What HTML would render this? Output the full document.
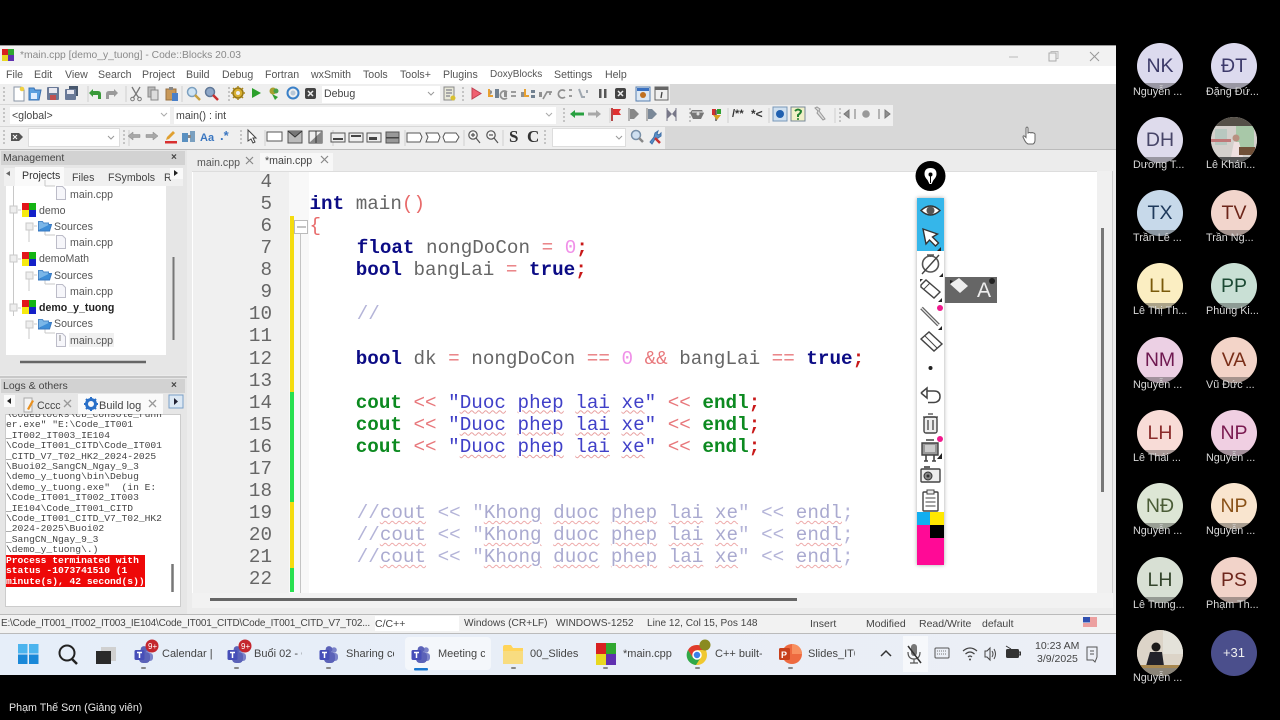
<!DOCTYPE html>
<html lang="vi"><head><meta charset="utf-8"><title>Code::Blocks</title>
<style>
html,body{margin:0;padding:0;width:1280px;height:720px;background:#000;overflow:hidden}
body{font-family:"Liberation Sans","Noto Sans CJK SC",sans-serif;position:relative}
.r{position:absolute}
.t{position:absolute;white-space:pre;line-height:14px;font-size:10.6px;color:#555}
#win{position:absolute;left:0;top:0;width:1280px;height:720px;filter:blur(.35px)}
#code{position:absolute;left:309.5px;top:171px;margin:0;font:19.25px/22.06px "Liberation Mono",monospace;color:#666;white-space:pre}
#nums{position:absolute;left:232px;width:40px;top:171px;margin:0;font:19.25px/22.06px "Liberation Mono",monospace;color:#666;text-align:right;white-space:pre}
.k{color:#0b0b85;font-weight:bold}.o{color:#e8787c}.n{color:#f090e8}.s{color:#c81818;font-weight:bold}.p{color:#e86a6a}
.g{color:#0c8a20;font-weight:bold}.q{color:#4040c8}.c{color:#b4b4d8;position:relative;left:1px}
.u{text-decoration:underline wavy #e8a0a0 1px;text-underline-offset:2px}
.c .w{color:#aaaad0;text-decoration:underline wavy #eeaaaa 1px;text-underline-offset:2px}
#log{position:absolute;left:6px;top:410px;width:170px;height:194px;overflow:hidden;clip-path:inset(4px 0 0 0);margin:0;font:9.65px/10.4px "Liberation Mono",monospace;color:#444;white-space:pre}
.av{position:absolute;width:46px;height:46px;border-radius:50%;overflow:hidden;text-align:center;font-size:19.5px;line-height:46px}
.av i{position:absolute;left:0;right:0;bottom:0;height:6px;background:rgba(60,60,60,.42)}
.lb{position:absolute;white-space:pre;font-size:10.8px;line-height:13px;color:#d8d8d8;margin-top:1px}
.tb{position:absolute;white-space:pre;font-size:11px;line-height:14px;color:#444;top:647px}
.st{font-size:10.5px;color:#444;top:617px}
</style></head><body>
<div id="win">
<div class="r" style="left:0;top:45px;width:1116px;height:630px;background:#d8d8d8"></div>
<div class="r" style="left:0;top:45px;width:1116px;height:21px;background:#f2f2f2;border-top:1px solid #999;box-sizing:border-box"></div>
<div class="r" style="left:0;top:66px;width:1116px;height:18px;background:#fff"></div>
<div class="r" style="left:0;top:84px;width:670px;height:20px;background:#efefef"></div>
<div class="r" style="left:0;top:105px;width:893px;height:21px;background:#efefef"></div>
<div class="r" style="left:0;top:127px;width:665px;height:22px;background:#efefef"></div>
<div class="r" style="left:0;top:149px;width:1116px;height:465px;background:#ececec;border-top:1px solid #bbb;box-sizing:border-box"></div>

<div class="t" style="left:20px;top:49px;font-size:10.3px;color:#8a8a8a">*main.cpp [demo_y_tuong] - Code::Blocks 20.03</div>
<div class="t" style="left:6px;top:68px">File</div><div class="t" style="left:34px;top:68px">Edit</div><div class="t" style="left:65px;top:68px">View</div><div class="t" style="left:98px;top:68px">Search</div><div class="t" style="left:142px;top:68px">Project</div><div class="t" style="left:186px;top:68px">Build</div><div class="t" style="left:222px;top:68px">Debug</div><div class="t" style="left:265px;top:68px">Fortran</div><div class="t" style="left:311px;top:68px">wxSmith</div><div class="t" style="left:363px;top:68px">Tools</div><div class="t" style="left:400px;top:68px">Tools+</div><div class="t" style="left:443px;top:68px">Plugins</div><div class="t" style="left:490px;top:68px;font-size:10px">DoxyBlocks</div><div class="t" style="left:554px;top:68px">Settings</div><div class="t" style="left:605px;top:68px">Help</div>

<!-- combos -->
<div class="r" style="left:322px;top:86px;width:118px;height:17px;background:#fff"></div>
<div class="t" style="left:324px;top:87px;color:#444">Debug</div>
<div class="r" style="left:10px;top:107px;width:160px;height:17px;background:#fff"></div>
<div class="t" style="left:12px;top:109px;color:#444">&lt;global&gt;</div>
<div class="r" style="left:174px;top:107px;width:382px;height:17px;background:#fff"></div>
<div class="t" style="left:176px;top:109px;color:#444">main() : int</div>
<div class="r" style="left:28px;top:128px;width:92px;height:19px;background:#fff;border:1px solid #ddd;box-sizing:border-box"></div>
<div class="r" style="left:552px;top:128px;width:74px;height:19px;background:#fff;border:1px solid #ddd;box-sizing:border-box"></div>
<div class="t" style="left:509px;top:128px;font:bold 17px/18px 'Liberation Serif',serif;color:#333">S</div>
<div class="t" style="left:527px;top:128px;font:bold 17px/18px 'Liberation Serif',serif;color:#333">C</div>
<div class="t" style="left:732px;top:107px;font:bold 11px/14px 'Liberation Sans',sans-serif;color:#333">/**</div>
<div class="t" style="left:751px;top:107px;font:bold 12px/14px 'Liberation Sans',sans-serif;color:#333">*&lt;</div>
<div class="t" style="left:220px;top:129px;font:bold 13px/14px 'Liberation Sans',sans-serif;color:#3a76c0">.*</div>

<svg class="r" style="left:0;top:0" width="1280" height="720" viewBox="0 0 1280 720" fill="none">
<defs>
<symbol id="tm" viewBox="0 0 20 20"><circle cx="15" cy="5" r="2.8" fill="#7b83c9"/><rect x="11" y="8" width="8" height="8" rx="3" fill="#7b83c9"/><circle cx="10" cy="4.5" r="3.4" fill="#5b62b8"/><rect x="5" y="7" width="11" height="11" rx="4" fill="#5b62b8"/><rect x="0.5" y="5" width="10" height="10" rx="1.5" fill="#464eb8"/><path d="M3 7.5h5M5.5 7.5v5.5" stroke="#fff" stroke-width="1.5"/></symbol>
<symbol id="pj" viewBox="0 0 14 14"><rect x="0" y="0" width="7" height="7" fill="#e2161a"/><rect x="7" y="0" width="7" height="7" fill="#14b414"/><rect x="0" y="7" width="7" height="7" fill="#f6ea10"/><rect x="7" y="7" width="7" height="7" fill="#1420c8"/></symbol>
<symbol id="fo" viewBox="0 0 14 12"><path d="M.5 2.5V11h11L13.5 4.5H4L2.5 10" fill="#3e8ed8" stroke="#3a78c0"/><path d="M.5 10V1.5h4l1 1.5h5v2" fill="#7ab6e8" stroke="#4a88c8"/></symbol>
<symbol id="fi" viewBox="0 0 10 14"><path d="M.5.5h6l3 3v10h-9z" fill="#f6f6fa" stroke="#bcbcc8"/></symbol>
</defs>

<!-- app icon and window controls -->
<g transform="translate(2,49)"><rect width="6" height="6" fill="#d82020"/><rect x="6" width="6" height="6" fill="#30a830"/><rect y="6" width="6" height="6" fill="#e8d820"/><rect x="6" y="6" width="6" height="6" fill="#6030b0"/></g>
<path d="M1009 57h9" stroke="#bbb"/><rect x="1049" y="53" width="7" height="8" stroke="#aaa"/><path d="M1051 53v-1.500h7v7h-2" stroke="#bbb"/><path d="M1090 52l9 9M1099 52l-9 9" stroke="#999"/>

<!-- grips -->
<g stroke="#c4c4c4" stroke-dasharray="2 2" stroke-width="2"><path d="M4 87v15M229 87v15M463 87v15M4 108v16M564 108v16M690 108v16M840 108v16M4 130v16M124 130v16M241 130v16M545 130v16M672 87v0"/></g>
<g stroke="#cfcfcf"><path d="M88 86v16M126 86v16M182 86v16M638 87v15M610 108v15M728 108v15M835 108v15M769 108v15M129 130v16M265 130v16M333 130v16M405 130v16M464 130v16M503 130v16"/></g>

<!-- row 1 -->
<path d="M14 87h7l3 3v11H14z" fill="#fff" stroke="#8a94a4"/><circle cx="22" cy="89" r="2.300" fill="#f0d040"/>
<path d="M29 100V88h5l1 2h6l-2 10z" fill="#5aa0e0" stroke="#3a70b0"/><rect x="31" y="93" width="6" height="6" fill="#dfeeff"/>
<rect x="47" y="87" width="12" height="13" rx="1" fill="#6a7a98"/><rect x="49" y="88" width="8" height="5" fill="#e8e8f0"/><rect x="50" y="95" width="6" height="5" fill="#c05050"/>
<rect x="69" y="86" width="9" height="10" fill="#48586e"/><rect x="65" y="89" width="11" height="11" rx="1" fill="#6a7a98"/><rect x="67" y="90" width="7" height="4" fill="#e8e8f0"/>
<path d="M89 93l4-4v2h5q3 0 3 3v5h-3v-4h-5v2z" fill="#3a9a3a"/>
<path d="M118 93l-4-4v2h-5q-3 0-3 3v5h3v-4h5v2z" fill="#9a9a9a"/>
<path d="M132 87l4 7 4-7M136 94l-3 4M136 94l3 4" stroke="#777" stroke-width="1.300"/><circle cx="132.500" cy="99" r="1.800" stroke="#777"/><circle cx="139.500" cy="99" r="1.800" stroke="#777"/>
<rect x="148" y="87" width="7" height="10" fill="#bbb" stroke="#888"/><rect x="151" y="90" width="7" height="10" fill="#ddd" stroke="#888"/>
<rect x="166" y="89" width="10" height="11" fill="#c89858" stroke="#987040"/><rect x="169" y="87" width="4" height="3" fill="#888"/><rect x="172" y="93" width="6" height="8" fill="#4a80c8"/>
<circle cx="192" cy="92" r="4.500" fill="#cfe4f4" stroke="#7ca0c0" stroke-width="1.500"/><path d="M195 95l5 5" stroke="#c8a040" stroke-width="2.500"/>
<circle cx="210" cy="92" r="4.500" fill="#8fa8c8" stroke="#607898" stroke-width="1.500"/><path d="M213 95l5 5" stroke="#c83030" stroke-width="2.500"/>
<circle cx="238" cy="93" r="5" fill="#d8b030" stroke="#987818" stroke-width="1.500"/><circle cx="238" cy="93" r="2" fill="#efefef"/><path d="M238 86v2M238 98v2M231 93h2M243 93h2M233 88l1 1M243 88l-1 1M233 98l1-1M243 98l-1-1" stroke="#a88820" stroke-width="1.500"/>
<path d="M252 88v10l9-5z" fill="#2ca02c"/>
<circle cx="273" cy="91" r="3.500" fill="#a8a030"/><path d="M272 94l6 3-3 3z" fill="#30a030"/><circle cx="276" cy="91" r="2.500" fill="#48a048"/>
<circle cx="293" cy="93" r="5.500" stroke="#3a80c8" stroke-width="2"/><circle cx="293" cy="93" r="2.500" fill="#b8c8d8"/>
<rect x="305" y="88" width="11" height="11" rx="2" fill="#444"/><path d="M308 91l5 5M313 91l-5 5" stroke="#eee" stroke-width="1.500"/>
<path d="M428 92l3 3 3-3" stroke="#999"/>
<rect x="444" y="87" width="10" height="13" fill="#e8e8d8" stroke="#888"/><path d="M446 90h6M446 93h6M446 96h4" stroke="#667"/><circle cx="453" cy="98" r="2.500" fill="#d8c030"/>
<path d="M472 88v11l9-5.500z" fill="#f06070" stroke="#c04050"/>
<g fill="#909090"><path d="M488 89l2 6 2-2v-2zM504 92h3v5h-3zM521 92h3v5h-3zM539 92h3v5h-3z"/></g>
<path d="M489 89v7h4" stroke="#e8a030" stroke-width="2"/><rect x="495" y="89" width="4" height="9" fill="#708090"/>
<path d="M507 92a4 4 0 1 0 0 6M511 92h5M511 96h5" stroke="#909090" stroke-width="1.700"/>
<path d="M525 89v7h4" stroke="#e8a030" stroke-width="2"/><rect x="531" y="90" width="4" height="3" fill="#708090"/><rect x="531" y="95" width="4" height="3" fill="#708090"/>
<path d="M543 99l4-7h5M550 92v3" stroke="#909090" stroke-width="1.700"/>
<path d="M565 91a4 4 0 1 0 0 6M569 90h3M569 96h3" stroke="#909090" stroke-width="1.700"/>
<path d="M579 89l3 8h3M587 90v3" stroke="#a0a8b0" stroke-width="2"/>
<rect x="599" y="89" width="2.500" height="9" fill="#555"/><rect x="604" y="89" width="2.500" height="9" fill="#555"/>
<rect x="615" y="88" width="11" height="11" rx="2" fill="#444"/><path d="M618 91l5 5M623 91l-5 5" stroke="#eee" stroke-width="1.500"/>
<rect x="636" y="87" width="14" height="14" fill="#dce8f4" stroke="#5a80b0"/><rect x="637" y="88" width="12" height="3" fill="#3a70c0"/><circle cx="643" cy="95" r="3" fill="#c07020"/>
<rect x="655" y="87" width="13" height="13" fill="#f0f0f0" stroke="#666"/><rect x="655" y="87" width="13" height="3" fill="#666"/><path d="M662 92l-1 6" stroke="#444" stroke-width="1.300"/>

<!-- row 2 -->
<path d="M161 113l3 3 3-3M546 113l3 3 3-3" stroke="#aaa"/>
<path d="M570 114l5-4v2.500h9v3h-9V118z" fill="#28a040"/>
<path d="M601 114l-5-4v2.500h-8v3h8V118z" fill="#a8a8a8"/>
<path d="M612 108v13" stroke="#a01010" stroke-width="1.500"/><path d="M613 109h8l-2 3 2 3h-8z" fill="#e03030"/>
<path d="M630 109h4l5 5-5 5h-4z" fill="#888"/><path d="M629 108v13" stroke="#777"/><path d="M648 109h4l5 5-5 5h-4z" fill="#7a8898"/><path d="M647 108v13" stroke="#777"/><path d="M667 108v13M676 108v13" stroke="#778"/><path d="M667 109l5 5 4-5v9l-4-4-5 5z" fill="#778"/>
<path d="M692 110h10l2 3-3 6h-8l-3-6z" fill="#777"/><path d="M692 112h12" stroke="#eee"/><circle cx="698" cy="114" r="1.500" fill="#ddd"/>
<rect x="712" y="109" width="4" height="6" fill="#d03030"/><rect x="717" y="109" width="4" height="5" fill="#30a030"/><path d="M716 110v11" stroke="#555" stroke-width="1.500"/><path d="M713 115h8l-4 5z" fill="#d8a020"/>
<rect x="773" y="107" width="14" height="14" fill="#cfe0f0" stroke="#7a98b8"/><circle cx="780" cy="114" r="4" fill="#2060b0"/>
<rect x="791" y="107" width="14" height="14" fill="#f0f0c8" stroke="#789"/><path d="M795 111q3-3 6 0 0 2-3 4v2" stroke="#208030" stroke-width="2"/><circle cx="798" cy="119" r="1" fill="#208030"/>
<path d="M815 108l3 3-1 2 6 7 2-1-6-8 1-2-3-2z" fill="#ddd" stroke="#999"/>
<path d="M855 109v10M844 114l5-4v8z" stroke="#777" fill="#909090"/>
<circle cx="866" cy="114" r="3.800" fill="#999"/>
<path d="M879 109v10M890 114l-5-4v8z" stroke="#777" fill="#909090"/>

<!-- row 3 -->
<path d="M11 133h8l4 4-4 4h-8z" fill="#555"/><path d="M13 135l4 4M17 135l-4 4" stroke="#fff"/>
<path d="M108 136l3 3 3-3M616 136l3 3 3-3" stroke="#999"/>
<path d="M128 136l5-4v2.500h7v3h-7V140z" fill="#a8a8a8" stroke="#888" stroke-width=".5"/>
<path d="M158 136l-5-4v2.500h-7v3h7V140z" fill="#a8a8a8" stroke="#888" stroke-width=".5"/>
<path d="M166 140l1-3 6-6 2 2-6 6z" fill="#e0a030"/><rect x="165" y="141" width="12" height="2.500" fill="#d83030"/>
<rect x="182" y="133" width="6" height="9" fill="#5a90c0"/><rect x="190" y="131" width="5" height="11" fill="#7aa0c0"/><rect x="188" y="135" width="3" height="3" fill="#888"/>
<text x="200" y="141" font-family="Liberation Sans" font-weight="bold" font-size="11" fill="#3a76c0">Aa</text>
<path d="M248 130v11l3-2 2 4 2-1-2-4h3z" fill="#fff" stroke="#444"/>
<rect x="267" y="132" width="15" height="9" fill="#fff" stroke="#555"/>
<rect x="288" y="131" width="14" height="12" fill="#bbb" stroke="#555"/><path d="M288 131l7 6 7-6" stroke="#333" fill="#777"/>
<rect x="309" y="131" width="13" height="12" fill="#eee" stroke="#444"/><path d="M309 143l13-12v12z" fill="#888"/><path d="M316 131v12" stroke="#333"/>
<g stroke="#555" fill="#eee"><rect x="331" y="133" width="14" height="9"/><rect x="349" y="133" width="14" height="9"/><rect x="367" y="133" width="14" height="9"/><rect x="386" y="132" width="13" height="11" fill="#999"/></g>
<g fill="#444"><rect x="333" y="138" width="10" height="2"/><rect x="351" y="135" width="10" height="2"/><rect x="369" y="137" width="8" height="3"/><rect x="386" y="137" width="13" height="1.500"/></g>
<g stroke="#555" fill="#fff"><path d="M407 133h13l2 4-2 5h-13z"/><path d="M426 133h12l2 4-2 5h-12l2-5z"/><path d="M445 133h11l3 4-3 5h-11l-2-5z"/></g>
<g stroke="#555" stroke-width="1.200"><circle cx="473" cy="135" r="4.200" fill="#f4f4f4"/><path d="M476 138l4 5M471 135h4M473 133v4"/><circle cx="491" cy="135" r="4.200" fill="#f4f4f4"/><path d="M494 138l4 5M489 135h4"/></g>
<circle cx="636" cy="135" r="4.500" fill="#cfe0f0" stroke="#7890a8" stroke-width="1.500"/><path d="M639 138l4 4" stroke="#888" stroke-width="2.500"/>
<path d="M650 142l4-5 1-4 3-2-1 3 2 1 2-2 0 3-3 2-3 1-3 5z" fill="#5a90c8" stroke="#4070a8"/><path d="M655 138l5 5" stroke="#c83030" stroke-width="2.500"/>

<!-- hand cursor -->
<path d="M1026 128q1-2 2 0v5q2-1 3 0 1-1 2 0 1-.500 2 1v6q0 3-2 4h-5q-2-1-3-3l-2-4q0-2 2-.500l1 1z" fill="#fff" stroke="#666"/>
</svg>

<!-- Management panel -->
<div class="r" style="left:0;top:150px;width:187px;height:225px;background:#e6e6e6"></div>
<div class="r" style="left:1px;top:151px;width:184px;height:14px;background:#d2d2d2"></div>
<div class="t" style="left:3px;top:151px;font-size:10.5px;color:#444">Management</div>
<div class="t" style="left:171px;top:151px;font-weight:bold;font-size:10px;color:#444">×</div>
<div class="r" style="left:4px;top:168px;width:179px;height:18px;background:#f0f0f0"></div>
<div class="r" style="left:15px;top:167px;width:49px;height:19px;background:#fafafa"></div>
<div class="t" style="left:22px;top:169px;color:#333">Projects</div>
<div class="t" style="left:72px;top:171px;color:#444">Files</div>
<div class="t" style="left:108px;top:171px;color:#444">FSymbols</div>
<div class="t" style="left:164px;top:171px;color:#444">R</div>
<div class="r" style="left:6px;top:186px;width:160px;height:169px;background:#fff"></div>
<div class="r" style="left:69px;top:333px;width:45px;height:14px;background:#f0f0f0"></div>
<div class="t" style="left:70px;top:187.500px;color:#555">main.cpp</div>
<div class="t" style="left:39px;top:203.500px;color:#555">demo</div>
<div class="t" style="left:54px;top:219.500px;color:#555">Sources</div>
<div class="t" style="left:70px;top:235.500px;color:#555">main.cpp</div>
<div class="t" style="left:39px;top:251.500px;color:#555">demoMath</div>
<div class="t" style="left:54px;top:268.500px;color:#555">Sources</div>
<div class="t" style="left:70px;top:284.500px;color:#555">main.cpp</div>
<div class="t" style="left:39px;top:300.500px;color:#222;font-weight:bold">demo_y_tuong</div>
<div class="t" style="left:54px;top:316.500px;color:#555">Sources</div>
<div class="t" style="left:70px;top:333.500px;color:#555">main.cpp</div>
<svg class="r" style="left:0;top:150px" width="190" height="225" fill="none">
<g stroke="#c8c8c8"><path d="M13.500 36v130M29 80v12M29 129v12M29 178v11M45 36h10M45 30v6M45 85h10M45 75v10M45 134h10M45 124v10M45 183h10M45 173v10M18 60h3M18 109h3M18 158h3M34 76h3M34 125h3M34 174h3"/><rect x="10" y="56" width="7" height="7" fill="#eee"/><rect x="10" y="105" width="7" height="7" fill="#eee"/><rect x="10" y="154" width="7" height="7" fill="#eee"/><rect x="26" y="73" width="7" height="7" fill="#eee"/><rect x="26" y="122" width="7" height="7" fill="#eee"/><rect x="26" y="171" width="7" height="7" fill="#eee"/></g>
<use href="#pj" x="22" y="53" width="14" height="14"/><use href="#pj" x="22" y="102" width="14" height="14"/><use href="#pj" x="22" y="150" width="14" height="14"/>
<use href="#fo" x="38" y="70" width="14" height="12"/><use href="#fo" x="38" y="119" width="14" height="12"/><use href="#fo" x="38" y="168" width="14" height="12"/>
<use href="#fi" x="56" y="36" width="10" height="14"/><use href="#fi" x="56" y="85" width="10" height="14"/><use href="#fi" x="56" y="134" width="10" height="14"/><use href="#fi" x="56" y="183" width="10" height="14"/>
<path d="M60 185v6" stroke="#888"/>
<path d="M173.500 107v83" stroke="#777" stroke-width="2"/><path d="M20 212h126" stroke="#666" stroke-width="2.500"/>
<path d="M10 21l-4 2.500 4 2.500z" fill="#666"/><rect x="170" y="18" width="13" height="11" fill="#fafafa"/><path d="M174 20l4 3-4 3z" fill="#222"/>
</svg>

<!-- Logs panel -->
<div class="r" style="left:0;top:376px;width:187px;height:238px;background:#e6e6e6;border-top:2px solid #c8c8c8;box-sizing:border-box"></div>
<div class="r" style="left:1px;top:379px;width:184px;height:14px;background:#d2d2d2"></div>
<div class="t" style="left:3px;top:379px;font-size:10.5px;color:#444">Logs &amp; others</div>
<div class="t" style="left:171px;top:379px;font-weight:bold;font-size:10px;color:#444">×</div>
<div class="r" style="left:78px;top:394px;width:85px;height:20px;background:#fafafa"></div>
<div class="t" style="left:37px;top:399px;color:#444">Cccc</div>
<div class="t" style="left:99px;top:398.500px;font-size:11px;color:#444">Build log</div>
<div class="r" style="left:5px;top:414px;width:176px;height:193px;background:#fff;border:1px solid #ccc;box-sizing:border-box"></div>
<pre id="log">\CodeBlocks\cb_console_runn
er.exe" "E:\Code_IT001
_IT002_IT003_IE104
\Code_IT001_CITD\Code_IT001
_CITD_V7_T02_HK2_2024-2025
\Buoi02_SangCN_Ngay_9_3
\demo_y_tuong\bin\Debug
\demo_y_tuong.exe"  (in E:
\Code_IT001_IT002_IT003
_IE104\Code_IT001_CITD
\Code_IT001_CITD_V7_T02_HK2
_2024-2025\Buoi02
_SangCN_Ngay_9_3
\demo_y_tuong\.)
<span style="background:#ee0808;color:#fff;font-weight:bold">Process terminated with 
status -1073741510 (1   
minute(s), 42 second(s))</span></pre>
<svg class="r" style="left:0;top:376px" width="190" height="240" fill="none">
<rect x="4" y="19" width="11" height="12" fill="#fafafa"/><path d="M11 22l-4 3 4 3z" fill="#222"/>
<rect x="169" y="19" width="14" height="13" fill="#dce8f4" stroke="#7aa0c8"/><path d="M174 22l4 3.500-4 3.500z" fill="#223"/>
<path d="M24 22h8v14h-8z" fill="#f4f4f4" stroke="#aaa"/><path d="M27 33l5-9 2 1-5 9z" fill="#e89020"/>
<path d="M64 24l7 7M71 24l-7 7M149 24l7 7M156 24l-7 7" stroke="#999" stroke-width="1.300"/>
<circle cx="91" cy="28" r="4.500" stroke="#2a70c8" stroke-width="3"/><path d="M91 21v2M91 33v2M84 28h2M96 28h2M86 23l1.500 1.500M96 23l-1.500 1.500M86 33l1.500-1.500M96 33l-1.500-1.500" stroke="#2a70c8" stroke-width="2"/>
<path d="M172.500 188v28" stroke="#777" stroke-width="2.500"/>
</svg>

<!-- Editor -->
<div class="t" style="left:197px;top:156px;color:#555">main.cpp</div>
<div class="r" style="left:260px;top:153px;width:73px;height:18px;background:#f7f7f7"></div>
<div class="t" style="left:265px;top:154px;color:#444">*main.cpp</div>
<div class="r" style="left:192px;top:171px;width:905px;height:422px;background:#fff;border-top:1px solid #ddd;box-sizing:border-box"></div>
<div class="r" style="left:193px;top:172px;width:96px;height:421px;background:#f0f0f0"></div>
<div class="r" style="left:289px;top:172px;width:20px;height:421px;background:#f8f8f8"></div>
<div class="r" style="left:300px;top:233px;width:1px;height:360px;background:#c4c4c4"></div>
<div class="r" style="left:290px;top:216px;width:3.5px;height:176px;background:#f4dc10"></div>
<div class="r" style="left:290px;top:392px;width:3.5px;height:110px;background:#28e050"></div>
<div class="r" style="left:290px;top:502px;width:3.5px;height:66px;background:#f4dc10"></div>
<div class="r" style="left:290px;top:568px;width:3.5px;height:24px;background:#28e050"></div>
<svg class="r" style="left:190px;top:150px" width="400" height="90" fill="none"><path d="M56 7l7 7M63 7l-7 7M131 6l7 7M138 6l-7 7" stroke="#888" stroke-width="1.200"/><rect x="104.500" y="70.500" width="13" height="13" fill="#fff" stroke="#bbb"/><path d="M107 77h9" stroke="#888"/></svg>
<pre id="nums"> 4
 5
 6
 7
 8
 9
10
11
12
13
14
15
16
17
18
19
20
21
22</pre>
<pre id="code">&#160;
<span class="k">int</span> main<span class="p">()</span>
<span class="p">{</span>
    <span class="k" style="position:relative;left:1px">float</span><span style="position:relative;left:1px"> nongDoCon <span class="o">=</span> <span class="n">0</span><span class="s">;</span></span>
    <span class="k">bool</span> bangLai <span class="o">=</span> <span class="k">true</span><span class="s">;</span>

    <span class="c">//</span>

    <span class="k">bool</span> dk <span class="o">=</span> nongDoCon <span class="o">==</span> <span class="n">0</span> <span class="o">&amp;&amp;</span> bangLai <span class="o">==</span> <span class="k">true</span><span class="s">;</span>

    <span class="g">cout</span> <span class="o">&lt;&lt;</span> <span class="q">"<span class="u">Duoc</span> <span class="u">phep</span> <span class="u">lai</span> <span class="u">xe</span>"</span> <span class="o">&lt;&lt;</span> <span class="g">endl</span><span class="s">;</span>
    <span class="g">cout</span> <span class="o">&lt;&lt;</span> <span class="q">"<span class="u">Duoc</span> <span class="u">phep</span> <span class="u">lai</span> <span class="u">xe</span>"</span> <span class="o">&lt;&lt;</span> <span class="g">endl</span><span class="s">;</span>
    <span class="g">cout</span> <span class="o">&lt;&lt;</span> <span class="q">"<span class="u">Duoc</span> <span class="u">phep</span> <span class="u">lai</span> <span class="u">xe</span>"</span> <span class="o">&lt;&lt;</span> <span class="g">endl</span><span class="s">;</span>


    <span class="c">//<span class="w">cout</span> &lt;&lt; "<span class="w">Khong</span> <span class="w">duoc</span> <span class="w">phep</span> <span class="w">lai</span> <span class="w">xe</span>" &lt;&lt; <span class="w">endl</span>;</span>
    <span class="c">//<span class="w">cout</span> &lt;&lt; "<span class="w">Khong</span> <span class="w">duoc</span> <span class="w">phep</span> <span class="w">lai</span> <span class="w">xe</span>" &lt;&lt; <span class="w">endl</span>;</span>
    <span class="c">//<span class="w">cout</span> &lt;&lt; "<span class="w">Khong</span> <span class="w">duoc</span> <span class="w">phep</span> <span class="w">lai</span> <span class="w">xe</span>" &lt;&lt; <span class="w">endl</span>;</span>
</pre>
<!-- scrollbars -->
<div class="r" style="left:1097px;top:171px;width:16px;height:422px;background:#f0f0f0;border-right:1px solid #ccc;box-sizing:border-box"></div>
<div class="r" style="left:1101px;top:228px;width:2.5px;height:264px;background:#777"></div>
<div class="r" style="left:192px;top:593px;width:921px;height:15px;background:#f2f2f2"></div>
<div class="r" style="left:210px;top:598px;width:587px;height:2.5px;background:#666"></div>

<!-- Epic Pen style toolbar -->
<div class="r" style="left:917px;top:198px;width:27px;height:367px;background:#fff;box-shadow:0 0 4px rgba(0,0,0,.35)"></div>
<div class="r" style="left:917px;top:198px;width:27px;height:53px;background:#35b6ea"></div>
<div class="r" style="left:945px;top:277px;width:52px;height:26px;background:#666"></div>
<div class="r" style="left:917px;top:512px;width:27px;height:53px;background:#ff0a96"></div>
<div class="r" style="left:917px;top:512px;width:13px;height:13px;background:#12aef0"></div>
<div class="r" style="left:930px;top:512px;width:14px;height:13px;background:#ffe800"></div>
<div class="r" style="left:930px;top:525px;width:14px;height:13px;background:#000"></div>
<div class="t" style="left:977px;top:279px;font-size:21px;line-height:23px;color:#eee">A</div>
<svg class="r" style="left:900px;top:155px" width="110" height="420" fill="none">
<circle cx="30.500" cy="21" r="15" fill="#000"/><path d="M30.500 13q6 0 6 6 0 3-3 6l-2 4h-2l-2-4q-3-3-3-6 0-6 6-6z" fill="#fff"/><circle cx="30.500" cy="19.500" r="2" fill="#000"/><path d="M30.500 21v7" stroke="#000" stroke-width="1"/>
<path d="M21 55.500q9.500-9 19 0-9.500 9-19 0z" fill="#fff" stroke="#333" stroke-width="1.500"/><circle cx="30.500" cy="55.500" r="4" fill="#555"/>
<path d="M23 74l3 15 3.500-4 6 6 3-3-6-6 5-3z" fill="#fff" stroke="#333" stroke-width="1.400"/>
<path d="M41 92v4h-4zM43 118v4h-4zM42 143v4h-4zM42 171v4h-4zM42 298v6h-5z" fill="#222"/>
<circle cx="30.500" cy="109" r="8" stroke="#555" stroke-width="1.600"/><path d="M27 100h7M30.500 100v2" stroke="#555" stroke-width="1.500"/><path d="M22 119l17-19" stroke="#444" stroke-width="1.400"/>
<path d="M21 130l5-5 14 12-6 6-13-11z" fill="#fff" stroke="#444" stroke-width="1.400"/><path d="M24 134l6-6" stroke="#444"/><path d="M23 124l-3 3v-3z" fill="#333"/>
<path d="M21.500 153l17 17" stroke="#555" stroke-width="3.500"/><path d="M21.500 153l17 17" stroke="#ddd" stroke-width="1.500"/><circle cx="40" cy="153" r="3" fill="#f0188c"/>
<path d="M21 184l8-7 13 12-8 7z" fill="#fff" stroke="#444" stroke-width="1.400"/><path d="M25 181l12 12" stroke="#444"/><path d="M21 184l4 4" stroke="#444"/>
<circle cx="30.500" cy="213" r="2" fill="#222"/>
<path d="M21 238l6-5v3h7q6 0 6 5.500t-6 6h-6" stroke="#444" stroke-width="1.500" fill="#fff"/><path d="M21 238l6 5v-7" stroke="#444" stroke-width="1.500"/>
<rect x="24" y="262" width="13" height="16" rx="2" fill="#eee" stroke="#444" stroke-width="1.400"/><path d="M23 262h15M28 259h5M28 265v10M33 265v10" stroke="#444" stroke-width="1.300"/>
<path d="M22 288h16v12H22z" fill="#999" stroke="#444" stroke-width="1.400"/><rect x="25" y="290" width="10" height="7" fill="#ccc"/><path d="M26 285h8M26 300v6M34 300v6M24 306h4M32 306h4" stroke="#444" stroke-width="1.600"/><circle cx="40" cy="284" r="3" fill="#f0188c"/>
<rect x="21" y="314" width="19" height="13" rx="1" fill="#eee" stroke="#444" stroke-width="1.400"/><rect x="24" y="311" width="6" height="3" fill="#666"/><circle cx="28" cy="321" r="4" fill="#888" stroke="#333"/><circle cx="28" cy="321" r="1.500" fill="#333"/>
<rect x="23" y="337" width="15" height="19" rx="1" fill="#fff" stroke="#444" stroke-width="1.400"/><rect x="27" y="335" width="7" height="4" fill="#eee" stroke="#444"/><path d="M25.500 343h10M25.500 347h10M25.500 351h10" stroke="#444"/>
<path d="M50 129l9-6 9 8-8 7z" fill="#eee"/><path d="M50 129l3-3-3-1z" fill="#222"/><circle cx="92" cy="126" r="3" fill="#222"/>
</svg>

<!-- Status bar -->
<div class="r" style="left:0;top:614px;width:1116px;height:20px;background:#f2f2f2;border-top:1px solid #bbb;border-bottom:1px solid #bbb;box-sizing:border-box"></div>
<div class="r" style="left:375px;top:616px;width:84px;height:15px;background:#fff"></div>
<div class="t st" style="left:1px;font-size:10px;letter-spacing:-.2px">E:\Code_IT001_IT002_IT003_IE104\Code_IT001_CITD\Code_IT001_CITD_V7_T02...</div>
<div class="t st" style="left:375px">C/C++</div>
<div class="t st" style="left:464px;font-size:10.2px">Windows (CR+LF)</div>
<div class="t st" style="left:556px;font-size:10.2px">WINDOWS-1252</div>
<div class="t st" style="left:647px;font-size:10.1px">Line 12, Col 15, Pos 148</div>
<div class="t st" style="left:810px">Insert</div>
<div class="t st" style="left:866px">Modified</div>
<div class="t st" style="left:919px">Read/Write</div>
<div class="t st" style="left:982px">default</div>

<!-- Taskbar -->
<div class="r" style="left:0;top:634px;width:1116px;height:41px;background:linear-gradient(90deg,#e6eef9,#e8eef7 50%,#eceff6)"></div>
<div class="r" style="left:405px;top:637px;width:86px;height:33px;background:#f4f7fb;border-radius:4px"></div>
<div class="r" style="left:903px;top:636px;width:25px;height:36px;background:#f6f8fb"></div>
<div class="tb" style="left:162px">Calendar |</div>
<div class="tb" style="left:254px;width:48px;overflow:hidden">Buổi 02 - Cả</div>
<div class="tb" style="left:346px;width:48px;overflow:hidden">Sharing cc</div>
<div class="tb" style="left:438px;width:47px;overflow:hidden">Meeting c</div>
<div class="tb" style="left:530px;width:48px;overflow:hidden">00_Slides_</div>
<div class="tb" style="left:623px">*main.cpp</div>
<div class="tb" style="left:715px;width:47px;overflow:hidden">C++ built-</div>
<div class="tb" style="left:808px;width:47px;overflow:hidden">Slides_IT0</div>
<div class="t" style="left:1035px;top:640px;font-size:10.5px;line-height:13px;color:#444">10:23 AM</div>
<div class="t" style="left:1037px;top:653px;font-size:10.5px;line-height:13px;color:#444">3/9/2025</div>
<svg class="r" style="left:0;top:634px" width="1116" height="41" fill="none">
<g><rect x="18" y="10" width="9.500" height="9.500" fill="#4cb4ee"/><rect x="29" y="10" width="9.500" height="9.500" fill="#4cb4ee"/><rect x="18" y="20.500" width="9.500" height="9.500" fill="#1a88d8"/><rect x="29" y="20.500" width="9.500" height="9.500" fill="#1a88d8"/></g>
<circle cx="67" cy="19" r="7.500" stroke="#222" stroke-width="2"/><path d="M72 25l5 5" stroke="#222" stroke-width="2.500"/>
<rect x="101" y="13" width="15" height="14" fill="#d0d0d0"/><rect x="96" y="17" width="15" height="13" fill="#2a2a2a"/>
<use href="#tm" x="134" y="11" width="20" height="20"/><use href="#tm" x="227" y="11" width="20" height="20"/><use href="#tm" x="319" y="11" width="20" height="20"/><use href="#tm" x="411" y="11" width="20" height="20"/>
<circle cx="152" cy="12" r="6.500" fill="#c4262e"/><circle cx="245" cy="12" r="6.500" fill="#c4262e"/>
<text x="148" y="15" fill="#fff" font-size="8" font-family="Liberation Sans">9+</text><text x="241" y="15" fill="#fff" font-size="8" font-family="Liberation Sans">9+</text>
<path d="M503 13q0-2 2-2h6l2 3h10v16h-20z" fill="#ffd45a"/><path d="M503 17h20v13h-20z" fill="#f8dc80"/>
<g transform="translate(596,9)"><rect width="10" height="11" fill="#d82020"/><rect x="10" width="10" height="11" fill="#30a830"/><rect y="11" width="10" height="11" fill="#e8d820"/><rect x="10" y="11" width="10" height="11" fill="#6030b0"/></g>
<circle cx="697" cy="21" r="10" fill="#f0c830"/><path d="M697 11a10 10 0 0 0-9 5l5 8 4-8h9a10 10 0 0 0-9-5z" fill="#e03c2c"/><path d="M688 16a10 10 0 0 0 8 15l5-8-8 1z" fill="#30a848"/><circle cx="697" cy="21" r="4" fill="#3a80e8" stroke="#fff" stroke-width="1.500"/><circle cx="705" cy="11" r="5.500" fill="#8a8a20"/>
<circle cx="792" cy="20" r="10" fill="#ee6a40"/><path d="M792 10a10 10 0 0 1 10 10h-10z" fill="#f89060"/><rect x="779" y="14" width="11" height="12" rx="1.500" fill="#c8401c"/><text x="781" y="24" fill="#fff" font-size="9" font-weight="bold" font-family="Liberation Sans">P</text>
<path d="M881 22l5-5 5 5" stroke="#333" stroke-width="1.500"/>
<rect x="911" y="10" width="6" height="12" rx="3" fill="#777"/><path d="M908 18q0 7 6 7t6-7M914 25v4M910 29h8" stroke="#555" stroke-width="1.200"/><path d="M908 12l13 17" stroke="#333" stroke-width="1.500"/>
<rect x="935" y="14" width="14" height="10" rx="1" stroke="#555"/><path d="M937 17h10M937 20h10" stroke="#777" stroke-dasharray="1 1"/>
<path d="M963 17q7-6 14 0M965.500 20q4.500-4 9 0M968 23q2-2 4 0" stroke="#444" stroke-width="1.200"/><circle cx="970" cy="25.500" r="1" fill="#444"/>
<path d="M985 17h2l3-3v12l-3-3h-2zM992 17q2 3 0 6M994 15q3 5 0 10" stroke="#444"/>
<rect x="1006" y="15" width="13" height="9" rx="1.500" fill="#333"/><path d="M1019 18h1.500v3H1019zM1006 12l5 3" stroke="#333"/>
<path d="M1087 13h10v10l-2 5-2-2h-6zM1090 17h4M1090 20h4" stroke="#555"/>
<g fill="#888"><rect x="141" y="33" width="5" height="2" rx="1"/><rect x="234" y="33" width="5" height="2" rx="1"/><rect x="326" y="33" width="5" height="2" rx="1"/><rect x="511" y="33" width="5" height="2" rx="1"/><rect x="603" y="33" width="5" height="2" rx="1"/><rect x="695" y="33" width="5" height="2" rx="1"/><rect x="788" y="33" width="5" height="2" rx="1"/></g>
<rect x="414" y="34" width="14" height="2.500" rx="1" fill="#1a78d0"/>
</svg>
<svg class="r" style="left:1080px;top:616px" width="22" height="14"><rect x="3" y="1" width="14" height="10" fill="#fff"/><path d="M3 2h14M3 4h14M3 6h14M3 8h14M3 10h14" stroke="#d84040"/><rect x="3" y="1" width="7" height="5.500" fill="#3050b0"/></svg>

<div class="t" style="left:9px;top:701px;font-size:10.7px;color:#e8e8e8">Phạm Thế Sơn (Giảng viên)</div>

<!-- Participants -->
<div class="av" style="left:1137px;top:43px;background:#dcdaee;color:#3c3a68">NK<i></i></div><div class="lb" style="left:1133px;top:85px">Nguyễn ...</div>
<div class="av" style="left:1211px;top:43px;background:#dcdaee;color:#3d3a6b">ĐT<i></i></div><div class="lb" style="left:1206px;top:85px">Đặng Đứ...</div>
<div class="av" style="left:1137px;top:116.5px;background:#dedbec;color:#474568">DH<i></i></div><div class="lb" style="left:1133px;top:158px">Dương T...</div>
<div class="av" style="left:1211px;top:116.5px;background:#c8c4c0"><svg width="46" height="46" style="position:absolute;left:0;top:0"><rect width="46" height="46" fill="#d4d0cc"/><rect x="0" y="0" width="46" height="9" fill="#555048"/><rect x="4" y="12" width="12" height="16" fill="#b8c8c0"/><rect x="25" y="9" width="18" height="22" fill="#a8c8a8"/><rect x="0" y="22" width="20" height="3" fill="#c07878"/><circle cx="25" cy="21" r="3.500" fill="#b89080"/><path d="M20 40l3-15h5l4 15z" fill="#efe0e0"/><rect x="28" y="30" width="16" height="8" fill="#705038"/><rect y="40" width="46" height="6" fill="#555"/></svg></div><div class="lb" style="left:1206px;top:158px">Lê Khán...</div>
<div class="av" style="left:1137px;top:190px;background:#c7d9ea;color:#1f3a5c">TX<i></i></div><div class="lb" style="left:1133px;top:231px">Trần Lê ...</div>
<div class="av" style="left:1211px;top:190px;background:#f2d5cc;color:#6d261a">TV<i></i></div><div class="lb" style="left:1206px;top:231px">Trần Ng...</div>
<div class="av" style="left:1137px;top:263px;background:#fbeec2;color:#7a5a0a">LL<i></i></div><div class="lb" style="left:1133px;top:304px">Lê Thị Th...</div>
<div class="av" style="left:1211px;top:263px;background:#c9e0d5;color:#1c4a34">PP<i></i></div><div class="lb" style="left:1206px;top:304px">Phùng Ki...</div>
<div class="av" style="left:1137px;top:336.5px;background:#ecd0e4;color:#6e1850">NM<i></i></div><div class="lb" style="left:1133px;top:378px">Nguyễn ...</div>
<div class="av" style="left:1211px;top:336.5px;background:#f3d4c8;color:#7a2e18">VA<i></i></div><div class="lb" style="left:1206px;top:378px">Vũ Đức ...</div>
<div class="av" style="left:1137px;top:410px;background:#f8dcd7;color:#8a2c2c">LH<i></i></div><div class="lb" style="left:1133px;top:451px">Lê Thái ...</div>
<div class="av" style="left:1211px;top:410px;background:#f0cfe2;color:#7a1a50">NP<i></i></div><div class="lb" style="left:1206px;top:451px">Nguyễn ...</div>
<div class="av" style="left:1137px;top:483px;background:#dde6d5;color:#4a5c36">NĐ<i></i></div><div class="lb" style="left:1133px;top:524px">Nguyễn ...</div>
<div class="av" style="left:1211px;top:483px;background:#f9e5cf;color:#8a5218">NP<i></i></div><div class="lb" style="left:1206px;top:524px">Nguyễn ...</div>
<div class="av" style="left:1137px;top:556.5px;background:#d8e0d4;color:#34452c">LH<i></i></div><div class="lb" style="left:1133px;top:598px">Lê Trung...</div>
<div class="av" style="left:1211px;top:556.5px;background:#f2d3c9;color:#6e261c">PS<i></i></div><div class="lb" style="left:1206px;top:598px">Phạm Th...</div>
<div class="av" style="left:1137px;top:629.5px;background:#d8d0c4"><svg width="46" height="46" style="position:absolute;left:0;top:0"><rect width="46" height="46" fill="#dcd4c8"/><rect x="26" y="0" width="20" height="24" fill="#e4e2da"/><circle cx="19" cy="17" r="4.500" fill="#1c1a1a"/><path d="M9 36l4-14h12l2 14z" fill="#22222a"/><rect y="35" width="46" height="3" fill="#a88850"/><rect y="38" width="46" height="8" fill="#8a8478"/></svg></div><div class="lb" style="left:1133px;top:671px">Nguyễn ...</div>
<div class="av" style="left:1211px;top:630px;background:#4b4f8c;color:#f0f0f0;font-size:13px;line-height:46px">+31</div>
</div>
</body></html>
